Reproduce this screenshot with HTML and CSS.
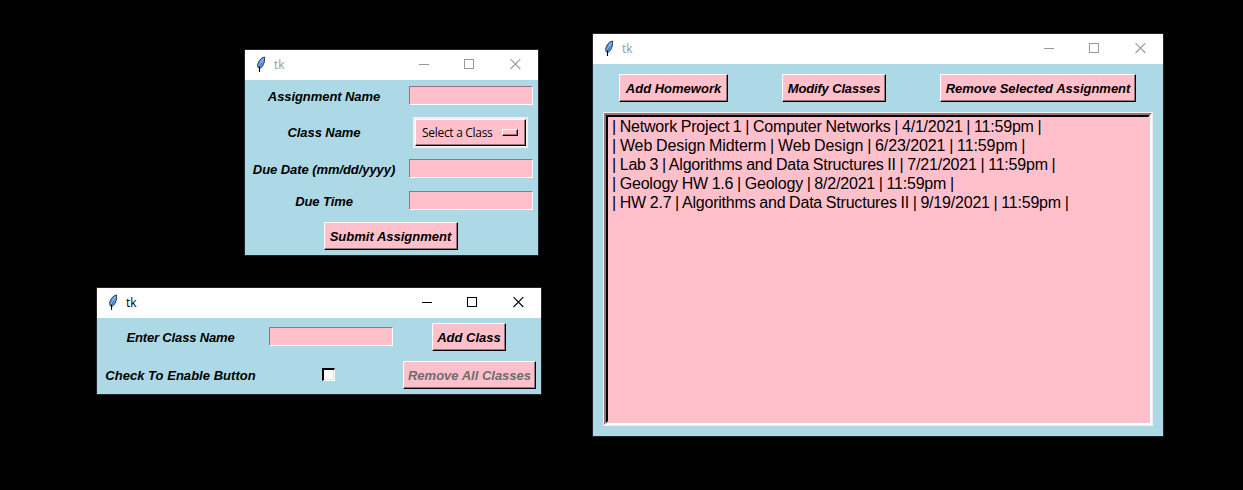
FILE: index.html
```html
<!DOCTYPE html>
<html lang="en">
<head>
<meta charset="utf-8">
<title>tk</title>
<link rel="stylesheet" href="styles.css">
</head>
<body>
<svg class="defs" width="0" height="0" aria-hidden="true">
  <symbol id="feather" viewBox="0 0 10 17">
    <path d="M8.7 1 5.8 2 3.2 4.8 1.6 8.5 2 11.6 4.3 12.2 6.5 10.3 8.3 6.2Z" fill="#5b9bea" stroke="#26303e" stroke-width=".9"/>
    <path d="M7.6 2.6 4.6 7.2 3.2 11" fill="none" stroke="#9cc4f5" stroke-width="1"/>
    <path d="M5.8 6.8 3.6 11" fill="none" stroke="#2b61a8" stroke-width=".8"/>
    <path d="M3.5 10.5V16" fill="none" stroke="#000" stroke-width="1.1"/>
  </symbol>
  <symbol id="controls" viewBox="0 0 103 12">
    <g fill="none" stroke="currentColor" shape-rendering="crispEdges">
      <path d="M0 6.5H10"/>
      <rect x="45.5" y="1.5" width="9" height="9"/>
    </g>
    <path d="M91.5 1.2 101.3 11M101.3 1.2 91.5 11" fill="none" stroke="currentColor" stroke-width="1.1"/>
  </symbol>
</svg>
<main class="desktop">
  <section class="window assignment">
    <header class="titlebar inactive">
      <svg class="feather"><use href="#feather"/></svg><span class="title">tk</span>
      <svg class="controls"><use href="#controls"/></svg>
    </header>
    <div class="assignment-form">
      <label>Assignment Name</label><div class="entry"></div>
      <label>Class Name</label>
      <div class="option"><div class="option-face"><span class="option-text">Select a Class</span><i class="indicator"></i></div></div>
      <label>Due Date (mm/dd/yyyy)</label><div class="entry"></div>
      <label class="due-time">Due Time</label><div class="entry"></div>
      <button class="button submit">Submit Assignment</button>
    </div>
  </section>

  <section class="window classes">
    <header class="titlebar">
      <svg class="feather"><use href="#feather"/></svg><span class="title">tk</span>
      <svg class="controls"><use href="#controls"/></svg>
    </header>
    <div class="classes-form">
      <label class="tight">Enter Class Name</label><div class="entry"></div><button class="button add-class">Add Class</button>
      <label class="wide">Check To Enable Button</label><div class="check"></div><button class="button remove-all" disabled>Remove All Classes</button>
    </div>
  </section>

  <section class="window homework">
    <header class="titlebar inactive">
      <svg class="feather"><use href="#feather"/></svg><span class="title">tk</span>
      <svg class="controls"><use href="#controls"/></svg>
    </header>
    <div class="toolbar">
      <button class="button add-homework">Add Homework</button>
      <button class="button modify">Modify Classes</button>
      <button class="button remove-selected">Remove Selected Assignment</button>
    </div>
    <div class="listbox"><div class="list-outer"><ul class="list">
      <li>| Network Project 1 | Computer Networks | 4/1/2021 | 11:59pm |</li>
      <li class="loose">| Web Design Midterm | Web Design | 6/23/2021 | 11:59pm |</li>
      <li>| Lab 3 | Algorithms and Data Structures II | 7/21/2021 | 11:59pm |</li>
      <li>| Geology HW 1.6 | Geology | 8/2/2021 | 11:59pm |</li>
      <li>| HW 2.7 | Algorithms and Data Structures II | 9/19/2021 | 11:59pm |</li>
    </ul></div></div>
  </section>
</main>
</body>
</html>
```
FILE: styles.css
```css
* { box-sizing: border-box; }
body { margin: 0; background: #000; }
.defs { display: block; }
.desktop { position: relative; width: 1243px; height: 490px; overflow: hidden; background: #000; }

.window { position: absolute; background: #add8e6; box-shadow: 0 0 0 1px #242424; color: #000; }
.assignment { left: 245px; top: 50px; width: 293px; height: 205px; }
.classes { left: 97px; top: 288px; width: 444px; height: 106px; }
.homework { left: 593px; top: 34px; width: 570px; height: 402px; }

.titlebar { display: flex; align-items: center; height: 30px; padding: 0 16px 2px 11px; background: #fff; }
.feather { width: 10px; height: 17px; }
.title { margin-left: 8px; font: 12px/16px "Open Sans", "Noto Sans", sans-serif; padding-top: 2px; }
.controls { width: 103px; height: 12px; margin-left: auto; }
.inactive { color: #999; }

label, .button { font: italic bold 13px/16px "Liberation Sans", Arial, sans-serif; white-space: nowrap; letter-spacing: -.07px; }
label { padding-top: 2px; }
label.tight { letter-spacing: -.15px; }
label.wide { letter-spacing: .03px; }
.button { height: 28px; margin: 0; padding: 2px 0 0; text-align: center; color: #000; background: #ffc0cb; border: 1px solid; border-color: #fff #000 #000 #fff; border-radius: 0; box-shadow: inset -1px -1px #99737a; letter-spacing: 0; }
.button:disabled { color: #6d6d6d; }
.entry { width: 124px; height: 19px; background: #ffc0cb; border: 1px solid; border-color: #99737a #fff #fff #99737a; }

.assignment-form { display: grid; grid-template-columns: 158px 130px; grid-template-rows: 31px 42px 31px 32px 40px; align-items: center; justify-items: center; }
.assignment-form .entry { justify-self: end; }
.due-time { padding-top: 4px; }
.option { width: 115px; height: 31px; margin-left: 5px; padding: 2px; background: #f0f0f0; }
.option-face { display: flex; align-items: center; height: 27px; padding: 0 7px 0 6px; background: #ffc0cb; border: 1px solid; border-color: #fff #000 #000 #fff; box-shadow: inset -1px -1px #99737a; }
.option-text { padding-top: 2px; font: 12px/16px "Open Sans", "Noto Sans", sans-serif; letter-spacing: -.3px; }
.indicator { width: 16px; height: 7px; margin-left: auto; border: 1px solid; border-color: #fff #000 #000 #fff; box-shadow: inset -1px -1px #99737a; }
.submit { grid-column: 1 / 3; width: 134px; margin-left: 3px; }

.classes-form { display: grid; grid-template-columns: 167px 134px 143px; grid-template-rows: 38px 38px; align-items: center; justify-items: center; }
.classes-form .entry { margin-bottom: 1px; }
.check { width: 13px; height: 13px; margin: 0 6px 1px 0; background: #fff; border: solid; border-width: 2px 1px 1px 2px; border-color: #000 #fff #fff #000; box-shadow: inset -1px -1px #e3e3e3; }
.add-class { width: 74px; margin-right: 1px; }
.remove-all { width: 133px; }

.toolbar { display: flex; padding: 10px 27px 10px 26px; justify-content: space-between; }
.add-homework { width: 109px; }
.modify { width: 104px; letter-spacing: -.15px; }
.remove-selected { width: 196px; letter-spacing: -.02px; }
.listbox { width: 550px; height: 314px; margin-left: 10px; border: 1px solid #f0f0f0; }
.list-outer { height: 100%; border: 2px solid; border-color: #99737a #fff #fff #99737a; }
.list { height: 100%; margin: 0; padding: 0 0 0 4px; list-style: none; background: #ffc0cb; border: 2px solid; border-color: #000 #ffc0cb #ffc0cb #000; font: 16px/19px "Liberation Sans", Arial, sans-serif; letter-spacing: -.2px; word-spacing: -.5px; white-space: nowrap; }
.loose { letter-spacing: -.1px; }
```
